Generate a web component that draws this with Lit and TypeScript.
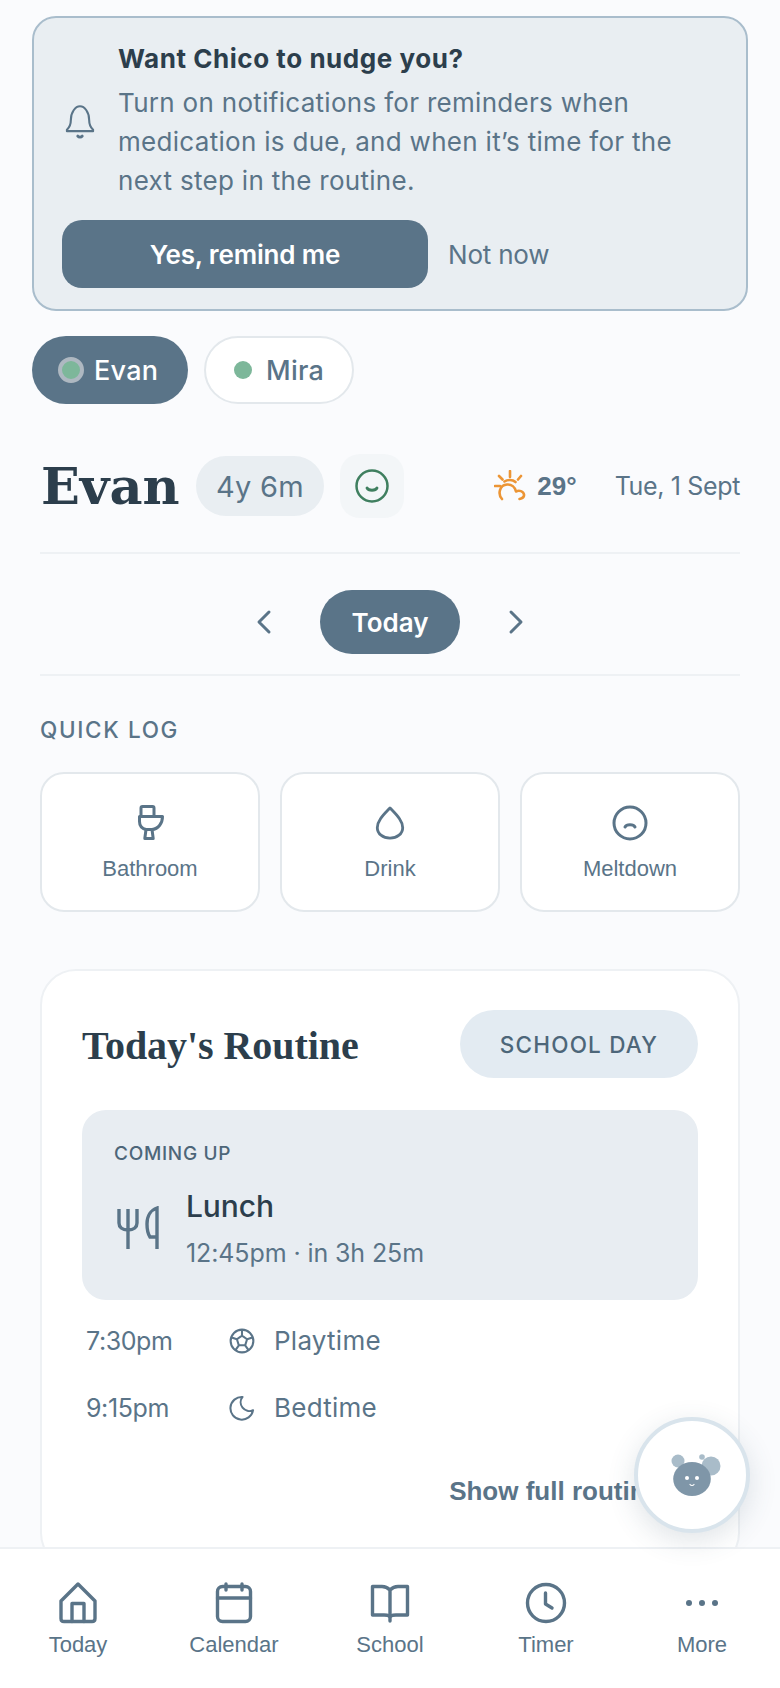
import { LitElement, html, css, svg } from "lit";
import { customElement } from "lit/decorators.js";

const bell = svg`<path d="M8 13.500c0-6 3.400-10.500 7-10.500s7 4.500 7 10.500c0 3.600 1 5.600 3 7.500v1H5v-1c2-1.900 3-3.900 3-7.500Z"/><path d="M13.300 25.800c.8 1 2.600 1 3.400 0" stroke-width="2.200"/>`;
const smile = svg`<circle cx="17" cy="17" r="15.500"/><path d="M12 19c1.500 3 8.500 3 10 0" stroke-width="2.800"/>`;
const sun = svg`<path d="M16 1v6M5 6l3.500 3.500M27 6l-3 3.500M1 16h5"/><path d="M8 29C3.500 24 5.500 15 13 14.500c4.500-.3 8 2.500 9 7 3-1.500 7.500-.5 8 3 .4 2.500-1.500 3.800-4.500 4.500"/><path d="M10.500 11.500c3-2 8-2 11 .5"/>`;
const toilet = svg`<path d="M3 11V3c0-1 .6-1.500 1.500-1.500h10c1 0 1.500.5 1.500 1.500v8"/><path d="M1.500 11.500h23c0 6.500-4 12.500-10.500 13H8c-4-1-6.500-4-6.500-8Z"/><path d="M8 24.500 6.800 33.500h8.400L14 24.500"/>`;
const drop = svg`<path d="M17 3c6 6.500 13.500 13 13.500 21 0 6.500-6 11-13.500 11S3.500 30.500 3.500 24C3.500 16 11 9.500 17 3Z"/>`;
const frown = svg`<circle cx="18" cy="18" r="16"/><path d="M13 22c1.500-3 8.500-3 10 0" stroke-width="3"/>`;
const cutlery = svg`<path d="M3 3v14c0 4 3 7 9 7s9-3 9-7V3M12 3v40M41 43V2c-6 2-10 8-10 16 0 5 1 10 3 13h7"/>`;
const ball = svg`<circle cx="12" cy="12" r="10.500"/><path d="m12 7 4.700 3.400-1.800 5.600H9.100l-1.800-5.600ZM12 7V1.800M16.700 10.400l4.900-1.700M14.900 16l3 4.200M9.100 16l-3 4.200M7.300 10.400 2.400 8.700"/>`;
const moon = svg`<path d="M12.500 1.800A10.500 10.500 0 1 0 22.200 14a8 8 0 0 1-9.700-12.200Z"/>`;
const home = svg`<path d="M2 19 19 2l17 17v17.500c0 2-1 3-3 3H5c-2 0-3-1-3-3Z"/><path d="M13 39.500v-18h12v18"/>`;
const cal = svg`<rect x="3.500" y="4.500" width="33" height="35" rx="5"/><path d="M3.500 16h33M12 2v6M28 2v6"/>`;
const book = svg`<path d="M20 7c-2-2-5-3.500-8-3.500H2.500V32H14c3 0 6 1 6 3 0-2 3-3 6-3h11.500V3.500H28c-3 0-6 1.500-8 3.500Zm0 0v31"/>`;
const clock = svg`<circle cx="21" cy="21" r="18.500"/><path d="M20.500 11v11l6.500 4"/>`;

@customElement("app-root")
export class AppRoot extends LitElement {
  static styles = css`
    :host {
      display: flex;
      flex-direction: column;
      height: 1688px;
      overflow: hidden;
      position: relative;
      background: #fafbfd;
      font-family: Inter, sans-serif;
      color: #5a7488;
    }
    svg { display: block; fill: none; stroke: currentColor; stroke-linecap: round; stroke-linejoin: round; flex: none; }
    main { flex: 1; min-height: 0; overflow: hidden; padding: 16px 32px 0; }

    .banner {
      box-sizing: border-box;
      height: 295px;
      background: #e9eef2;
      border: 2px solid #a9bdcc;
      border-radius: 24px;
      padding: 25px 28px 0;
    }
    .banner-top { display: flex; align-items: center; gap: 23px; }
    .bell { width: 30px; height: 34px; stroke-width: 1.600; margin-left: 3px; }
    .b-title { font-size: 26px; line-height: 32px; font-weight: 700; letter-spacing: .55px; color: #2c3e4c; }
    .b-body { font-size: 26px; line-height: 39px; letter-spacing: .3px; margin-top: 8px; white-space: nowrap; }
    .banner-actions { display: flex; align-items: center; gap: 20px; margin-top: 20px; }
    .primary {
      width: 366px; height: 68px; border-radius: 20px; background: #5a7488; color: #fff;
      display: flex; align-items: center; justify-content: center;
      font-size: 26px; font-weight: 600; letter-spacing: -.15px;
    }
    .not-now { font-size: 26px; letter-spacing: -.2px; }

    .people { display: flex; gap: 16px; margin-top: 25px; }
    .person {
      box-sizing: border-box; height: 68px; border-radius: 34px; display: flex; align-items: center;
      font-size: 27px; font-weight: 550; letter-spacing: .25px;
    }
    .person.on { width: 156px; background: #5a7488; color: #fff; padding-left: 26px; gap: 10px; }
    .person.off { width: 150px; background: #fff; border: 2px solid #e3e8ec; padding-left: 28px; gap: 14px; }
    .dot { width: 18px; height: 18px; border-radius: 50%; background: #7db79a; }
    .on .dot { box-sizing: content-box; width: 18px; height: 18px; border: 4px solid #aeb8c1; }

    .section { padding: 0 8px; }
    .who { display: flex; align-items: center; height: 64px; margin-top: 50px; }
    h1 { margin: 0 0 0 1px; font: 700 51px/64px "DejaVu Serif", serif; color: #2c3e4c; width: 155px; flex: none; }
    .age {
      width: 128px; height: 60px; border-radius: 30px; background: #e9eef2; display: flex; align-items: center;
      justify-content: center; font-size: 29px; letter-spacing: .3px;
    }
    .mood { width: 64px; height: 64px; border-radius: 20px; background: #f3f6f8; margin-left: 16px; display: flex; align-items: center; justify-content: center; }
    .mood svg { width: 34px; height: 34px; stroke: #3f7f5f; stroke-width: 2.500; }
    .weather { display: flex; align-items: center; margin-left: auto; }
    .weather svg { width: 32px; height: 32px; stroke: #ec9535; stroke-width: 2.600; }
    .temp { font: 700 26px "Liberation Sans", sans-serif; margin-left: 11px; }
    .date { font-size: 25px; letter-spacing: -.35px; margin-left: 38px; }

    .nav-day {
      display: flex; align-items: center; justify-content: center; gap: 48px;
      height: 104px; padding-top: 16px; margin-top: 34px;
      border-top: 2px solid #eef1f4; border-bottom: 2px solid #eef1f4;
    }
    .nav-day svg { width: 16px; height: 26px; stroke-width: 3; }
    .pill-today {
      width: 140px; height: 64px; border-radius: 32px; background: #5a7488; color: #fff;
      display: flex; align-items: center; justify-content: center; font-size: 26px; font-weight: 600;
    }
    .label { font-size: 22.500px; font-weight: 550; letter-spacing: 1.650px; line-height: 28px; margin-top: 40px; }
    .quick { display: grid; grid-template-columns: repeat(3, 1fr); gap: 20px; margin-top: 28px; }
    .q {
      box-sizing: border-box; height: 140px; background: #fff; border: 2px solid #e3e8ec; border-radius: 24px;
      display: flex; flex-direction: column; align-items: center;
      font: 22px/26px "Liberation Sans", sans-serif; padding-top: 29px;
    }
    .q .ic { height: 40px; display: flex; align-items: center; justify-content: center; margin-bottom: 13px; }
    .q svg { stroke-width: 3; }
    .toilet { margin-left: 2px; }

    .card {
      box-sizing: border-box; height: 600px; margin-top: 57px; background: #fff; border: 2px solid #eef1f4;
      border-radius: 36px; padding: 39px 40px; position: relative;
    }
    .c-head { display: flex; align-items: center; justify-content: space-between; }
    h2 { margin: 0; font: 700 40px/44px "Liberation Serif", serif; color: #2c3e4c; padding-top: 4px; letter-spacing: -.05px; }
    .tag {
      width: 238px; height: 68px; border-radius: 34px; background: #e3ebf2; display: flex; align-items: center;
      justify-content: center; font-size: 22.500px; font-weight: 550; letter-spacing: 1.200px; color: #4d6679;
    }
    .up { box-sizing: border-box; height: 190px; margin-top: 32px; background: #e8edf2; border-radius: 24px; padding: 31px 32px 0; }
    .up-label { font-size: 19px; font-weight: 550; letter-spacing: .700px; line-height: 26px; color: #4d6679; }
    .up-row { display: flex; align-items: center; gap: 26px; margin-top: 20px; }
    .up-row svg { width: 44px; height: 44px; stroke-width: 3.400; stroke-linecap: butt; stroke-linejoin: miter; margin-left: 2px; }
    .up-name { font-size: 30px; font-weight: 550; line-height: 38px; color: #2c3e4c; letter-spacing: -.1px; }
    .up-time { font-size: 25px; line-height: 32px; letter-spacing: -.1px; margin-top: 12px; }
    .row { display: flex; align-items: center; height: 67px; font-size: 26px; }
    .rows { margin-top: 7px; }
    .t { width: 147px; padding-left: 4px; font-size: 25px; letter-spacing: -.4px; box-sizing: border-box; flex: none; }
    .row svg { width: 26px; height: 26px; stroke-width: 1.900; }
    .row span.n { margin-left: 19px; letter-spacing: .25px; }
    .more { font: 700 26px/32px "Liberation Sans", sans-serif; text-align: right; padding-right: 38px; margin-top: 34px; }

    nav {
      flex: none; box-sizing: border-box; height: 141px; background: #fff; border-top: 2px solid #eef1f4;
      display: grid; grid-template-columns: repeat(5, 1fr); position: relative;
    }
    .tab { display: flex; flex-direction: column; align-items: center; padding-top: 32px; font: 22px/26px "Liberation Sans", sans-serif; }
    .tab .ic { height: 44px; display: flex; align-items: center; justify-content: center; margin-bottom: 7px; }
    .tab svg { stroke-width: 3.400; }
    .dots { display: flex; gap: 7px; }
    .dots i { width: 6px; height: 6px; border-radius: 50%; background: #5a7488; display: block; }

    .fab {
      position: absolute; left: 634px; top: 1417px; width: 116px; height: 116px; box-sizing: border-box;
      border-radius: 50%; background: #fff; border: 4px solid #d9e4ec;
      box-shadow: 0 8px 28px rgba(60, 85, 105, .16);
    }
    .fab svg { width: 108px; height: 108px; stroke: none; }
  `;

  render() {
    return html`
      <main>
        <div class="banner">
          <div class="banner-top">
            <svg class="bell" viewBox="4 2 22 26">${bell}</svg>
            <div>
              <div class="b-title">Want Chico to nudge you?</div>
              <div class="b-body">Turn on notifications for reminders when<br />medication is due, and when it’s time for the<br />next step in the routine.</div>
            </div>
          </div>
          <div class="banner-actions">
            <div class="primary">Yes, remind me</div>
            <div class="not-now">Not now</div>
          </div>
        </div>

        <div class="people">
          <div class="person on"><span class="dot"></span>Evan</div>
          <div class="person off"><span class="dot"></span>Mira</div>
        </div>

        <div class="section">
          <div class="who">
            <h1>Evan</h1>
            <div class="age">4y 6m</div>
            <div class="mood"><svg viewBox="0 0 34 34">${smile}</svg></div>
            <div class="weather"><svg viewBox="0 0 32 32">${sun}</svg><span class="temp">29°</span></div>
            <div class="date">Tue, 1 Sept</div>
          </div>

          <div class="nav-day">
            <svg viewBox="0 0 16 26"><path d="M13 3 3 13l10 10" /></svg>
            <div class="pill-today">Today</div>
            <svg viewBox="0 0 16 26"><path d="m3 3 10 10L3 23" /></svg>
          </div>

          <div class="label">QUICK LOG</div>
          <div class="quick">
            <div class="q"><div class="ic"><svg class="toilet" width="26" height="36" viewBox="0 0 26 36">${toilet}</svg></div>Bathroom</div>
            <div class="q"><div class="ic"><svg width="32" height="36" viewBox="0 0 34 38">${drop}</svg></div>Drink</div>
            <div class="q"><div class="ic"><svg width="36" height="36" viewBox="0 0 36 36">${frown}</svg></div>Meltdown</div>
          </div>

          <div class="card">
            <div class="c-head">
              <h2>Today's Routine</h2>
              <div class="tag">SCHOOL DAY</div>
            </div>
            <div class="up">
              <div class="up-label">COMING UP</div>
              <div class="up-row">
                <svg viewBox="0 0 44 44">${cutlery}</svg>
                <div>
                  <div class="up-name">Lunch</div>
                  <div class="up-time">12:45pm · in 3h 25m</div>
                </div>
              </div>
            </div>
            <div class="rows">
              <div class="row"><span class="t">7:30pm</span><svg viewBox="0 0 24 24">${ball}</svg><span class="n">Playtime</span></div>
              <div class="row"><span class="t">9:15pm</span><svg viewBox="0 0 24 24">${moon}</svg><span class="n">Bedtime</span></div>
            </div>
            <div class="more">Show full routine</div>
          </div>
        </div>
      </main>

      <nav>
        <div class="tab"><div class="ic"><svg width="38" height="42" viewBox="0 0 38 42">${home}</svg></div>Today</div>
        <div class="tab"><div class="ic"><svg width="40" height="42" viewBox="0 0 40 42">${cal}</svg></div>Calendar</div>
        <div class="tab"><div class="ic"><svg width="40" height="40" viewBox="0 0 40 40">${book}</svg></div>School</div>
        <div class="tab"><div class="ic"><svg width="42" height="42" viewBox="0 0 42 42">${clock}</svg></div>Timer</div>
        <div class="tab"><div class="ic"><div class="dots"><i></i><i></i><i></i></div></div>More</div>
      </nav>

      <div class="fab">
        <svg viewBox="634 1417 108 108">
          <circle cx="674" cy="1457" r="6.500" fill="#a9bcc9" />
          <circle cx="707" cy="1462" r="9.500" fill="#a9bcc9" />
          <circle cx="698" cy="1453" r="2.800" fill="#a9bcc9" />
          <ellipse cx="688" cy="1475" rx="18.800" ry="17" fill="#7f96a8" />
          <circle cx="683" cy="1474" r="2" fill="#fff" />
          <circle cx="693" cy="1474" r="2" fill="#fff" />
          <path d="M686 1480.500c1 1.300 3 1.300 4 0" stroke="#fff" stroke-width="1.200" fill="none" />
        </svg>
      </div>
    `;
  }
}
